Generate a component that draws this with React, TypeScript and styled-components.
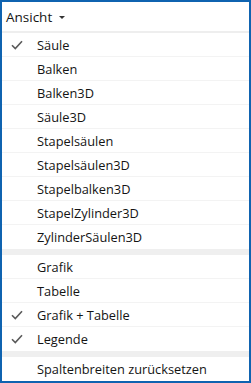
import React from 'react';
import styled, { createGlobalStyle } from 'styled-components';

type Item = {
  label: string;
  checked?: boolean;
};

const groups: Item[][] = [
  [
    { label: 'Säule', checked: true },
    { label: 'Balken' },
    { label: 'Balken3D' },
    { label: 'Säule3D' },
    { label: 'Stapelsäulen' },
    { label: 'Stapelsäulen3D' },
    { label: 'Stapelbalken3D' },
    { label: 'StapelZylinder3D' },
    { label: 'ZylinderSäulen3D' },
  ],
  [
    { label: 'Grafik' },
    { label: 'Tabelle' },
    { label: 'Grafik + Tabelle', checked: true },
    { label: 'Legende', checked: true },
  ],
  [{ label: 'Spaltenbreiten zurücksetzen' }],
];

const Check = () => (
  <svg width="12" height="10" viewBox="0 0 12 10">
    <path d="M1 5.2 L4.3 8.6 L11 1.2" fill="none" stroke="#5a5a5a" strokeWidth="1.6" />
  </svg>
);

const App: React.FC = () => {
  return (
    <>
      <GlobalStyle />
      <Frame>
        <Header>
          <HeaderLabel>Ansicht</HeaderLabel>
          <Caret />
        </Header>
        {groups.map((group, gi) => (
          <Group key={gi} first={gi === 0}>
            {group.map((item) => (
              <Row key={item.label}>
                <CheckCell>{item.checked && <Check />}</CheckCell>
                <Label>{item.label}</Label>
              </Row>
            ))}
          </Group>
        ))}
      </Frame>
    </>
  );
};

const GlobalStyle = createGlobalStyle`
  html, body {
    margin: 0;
    padding: 0;
    background: #ffffff;
  }
  body {
    font-family: 'Open Sans', 'Noto Sans', sans-serif;
  }
`;

const Frame = styled.div`
  box-sizing: border-box;
  width: 251px;
  height: 383px;
  border: 2px solid #0f63b0;
  background: #ffffff;
  display: flex;
  flex-direction: column;
  overflow: hidden;
`;

const Header = styled.div`
  height: 30px;
  display: flex;
  align-items: center;
  gap: 7px;
  padding-left: 4px;
  border-bottom: 2px solid #eeeeee;
`;

const HeaderLabel = styled.span`
  font-size: 13.5px;
  color: #141414;
`;

const Caret = styled.span`
  width: 0;
  height: 0;
  border-left: 3px solid transparent;
  border-right: 3px solid transparent;
  border-top: 3px solid #333333;
  margin-top: 1px;
`;

const Group = styled.div<{ first?: boolean }>`
  display: flex;
  flex-direction: column;
  border-top: ${(p) => (p.first ? 'none' : '6px solid #efefef')};
`;

const Row = styled.div`
  height: 23px;
  display: flex;
  align-items: center;
  border-bottom: 1px solid #f3f3f3;

  &:last-child {
    border-bottom: none;
    height: 24px;
  }
`;

const CheckCell = styled.span`
  width: 35px;
  display: flex;
  justify-content: center;
  padding-right: 6px;
  box-sizing: border-box;
`;

const Label = styled.span`
  font-size: 12.8px;
  color: #141414;
  white-space: nowrap;
`;

export default App;
